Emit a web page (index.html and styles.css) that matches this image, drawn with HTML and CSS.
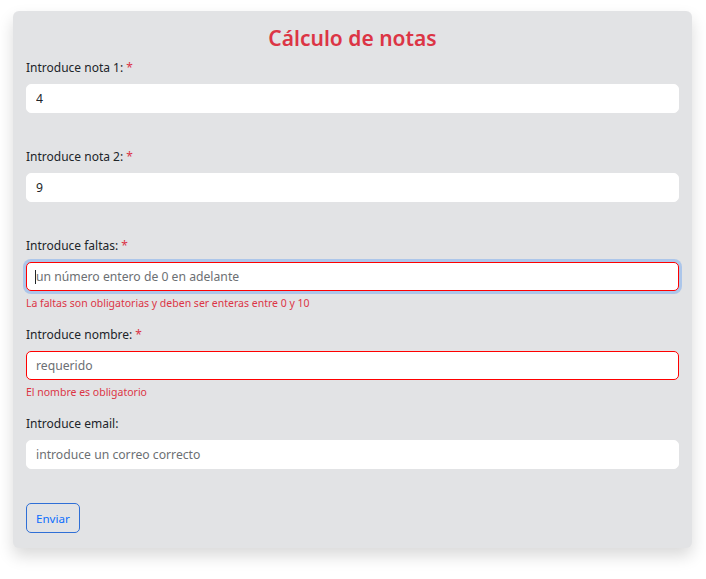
FILE: index.html
```html
<!DOCTYPE html>
<html lang="es">
<head>
<meta charset="utf-8">
<title>Cálculo de notas</title>
<link rel="stylesheet" href="styles.css">
</head>
<body>
<div class="page">
  <form class="card">
    <h1 class="title">Cálculo de notas</h1>
    <div class="group">
      <label class="label">Introduce nota 1: <span class="req">*</span></label>
      <input class="field" type="text" value="4">
      <div class="error"></div>
    </div>
    <div class="group">
      <label class="label">Introduce nota 2: <span class="req">*</span></label>
      <input class="field" type="text" value="9">
      <div class="error"></div>
    </div>
    <div class="group">
      <label class="label">Introduce faltas: <span class="req">*</span></label>
      <div class="field-wrap">
        <input class="field invalid focused" type="text" placeholder="un número entero de 0 en adelante">
        <span class="caret"></span>
      </div>
      <div class="error">La faltas son obligatorias y deben ser enteras entre 0 y 10</div>
    </div>
    <div class="group">
      <label class="label">Introduce nombre: <span class="req">*</span></label>
      <input class="field invalid" type="text" placeholder="requerido">
      <div class="error">El nombre es obligatorio</div>
    </div>
    <div class="group">
      <label class="label">Introduce email:</label>
      <input class="field" type="text" placeholder="introduce un correo correcto">
      <div class="error"></div>
    </div>
    <button class="btn" type="button">Enviar</button>
  </form>
</div>
</body>
</html>
```

FILE: styles.css
```css
html, body {
  margin: 0;
  padding: 0;
  background: #ffffff;
}
body {
  font-family: "Noto Sans", "Open Sans", sans-serif;
  color: #212529;
}
.page {
  padding: 11px 14px 30px 13px;
}
.card {
  display: flex;
  flex-direction: column;
  align-items: stretch;
  background: #e2e3e5;
  border-radius: 6px;
  padding: 11px 13px 15px 13px;
  box-shadow: 0 8px 16px rgba(0, 0, 0, 0.15);
}
.title {
  margin: 0 0 4px 0;
  text-align: center;
  font-size: 21px;
  line-height: 32px;
  font-weight: 600;
  color: #dc3545;
}
.group {
  display: flex;
  flex-direction: column;
}
.label {
  font-size: 12px;
  line-height: 20px;
  margin-bottom: 6px;
  color: #212529;
}
.req {
  color: #dc3545;
}
.field-wrap {
  position: relative;
  display: flex;
}
.caret {
  position: absolute;
  left: 9px;
  top: 8px;
  width: 1px;
  height: 14px;
  background: #212529;
}
.field {
  box-sizing: border-box;
  height: 29px;
  width: 100%;
  border: 1px solid #ffffff;
  border-radius: 5px;
  background: #ffffff;
  padding: 0 9px;
  font-family: "Noto Sans", "Open Sans", sans-serif;
  font-size: 12.2px;
  color: #212529;
  outline: none;
}
.field::placeholder {
  color: #6c6f73;
  opacity: 1;
}
.field.invalid {
  border-color: #ff0000;
}
.field.focused {
  box-shadow: 0 0 0 3px rgba(13, 110, 253, 0.25);
}
.error {
  min-height: 16px;
  margin: 4px 0 14px 0;
  font-size: 10.5px;
  line-height: 16px;
  color: #dc3545;
}
.btn {
  align-self: flex-start;
  box-sizing: border-box;
  height: 30px;
  padding: 0 9px;
  border: 1px solid #2f6fd6;
  border-radius: 5px;
  background: transparent;
  color: #0d6efd;
  font-family: "Noto Sans", "Open Sans", sans-serif;
  font-size: 11.6px;
}
```
